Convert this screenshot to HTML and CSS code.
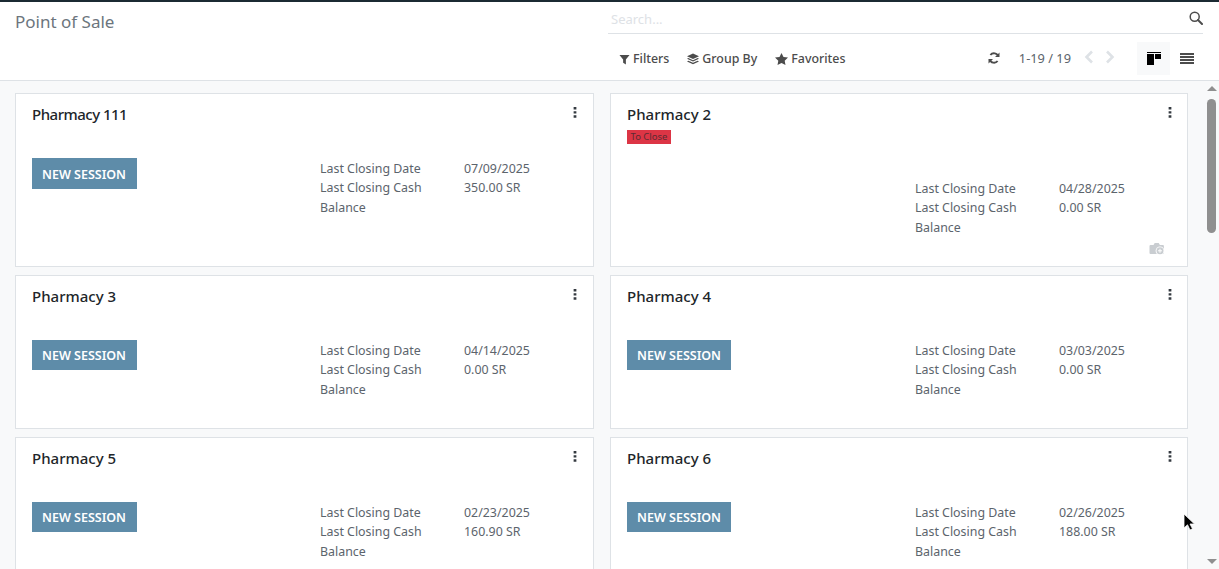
FILE: index.html
```html
<!DOCTYPE html>
<html lang="en">
<head>
<meta charset="utf-8">
<title>Point of Sale</title>
<link rel="stylesheet" href="styles.css">
</head>
<body>
<div class="app">
  <header class="panel">
    <div class="panel-left"><h1 class="title">Point of Sale</h1></div>
    <div class="panel-right">
      <div class="search">
        <span class="search-text">Search...</span>
        <svg class="search-icon" viewBox="0 0 14 14"><circle cx="5.7" cy="5.7" r="4.5" fill="none" stroke="#4c4c4c" stroke-width="1.5"/><path d="M9 9l4 4" stroke="#4c4c4c" stroke-width="2" stroke-linecap="round"/></svg>
      </div>
      <div class="tools">
        <div class="menus">
          <span class="menu"><svg class="micon" viewBox="0 0 12 12"><path d="M0.5 1h11L7.5 6v5.5L4.5 9.5V6z" fill="#4c4c4c"/></svg>Filters</span>
          <span class="menu"><svg class="micon layers" viewBox="0 0 13 12"><path d="M6.5 0L13 3 6.5 6 0 3z" fill="#4c4c4c"/><path d="M1.5 5L6.5 7.3 11.5 5 13 5.8 6.5 8.8 0 5.8zM1.5 7.8L6.5 10.1 11.5 7.8 13 8.6 6.5 11.6 0 8.6z" fill="#4c4c4c"/></svg>Group By</span>
          <span class="menu"><svg class="micon star" viewBox="0 0 13 12"><path d="M6.5 0l2 4 4.5.6-3.3 3.1.8 4.3-4-2.1-4 2.1.8-4.3L0 4.600l4.500-.6z" fill="#4c4c4c"/></svg>Favorites</span>
        </div>
        <div class="pager">
          <svg class="refresh" viewBox="0 0 12 12"><path d="M10.300 4.500A4.500 4.500 0 0 0 2.400 3M1.700 7.500A4.500 4.500 0 0 0 9.600 9" fill="none" stroke="#4c4c4c" stroke-width="1.900"/><path d="M11.500 0.500v4.500H7zM0.500 11.500V7H5z" fill="#4c4c4c"/></svg>
          <span class="count">1-19 / 19</span>
          <svg class="chev" viewBox="0 0 10 14"><path d="M8 1.500L2.500 7 8 12.500" fill="none" stroke="#dee2e6" stroke-width="2.600"/></svg>
          <svg class="chev chev-next" viewBox="0 0 10 14"><path d="M2 1.500L7.500 7 2 12.500" fill="none" stroke="#dee2e6" stroke-width="2.600"/></svg>
          <span class="view view-on"><svg class="kanban" viewBox="0 0 14 13"><path d="M0 0h14v1H0zM0 2h7v11H0zM8 2h6v5H8z" fill="#000"/></svg></span>
          <span class="view"><svg class="list" viewBox="0 0 14 11"><path d="M0 0h14v2H0zM0 3h14v2H0zM0 6h14v2H0zM0 9h14v2H0z" fill="#4c4c4c"/></svg></span>
        </div>
      </div>
    </div>
  </header>
  <main class="content">
    <div class="cards">
      <article class="card">
        <div class="card-top"><h2 class="name name-tight">Pharmacy 111</h2><svg class="dots" viewBox="0 0 4 12"><path d="M0.500 0h3v2.600h-3zM0.500 4.500h3v2.600h-3zM0.500 9h3v2.600h-3z" fill="#343a40"/></svg></div>
        <div class="card-body">
          <div class="action"><span class="btn">NEW SESSION</span></div>
          <dl class="stats"><dt>Last Closing Date</dt><dd>07/09/2025</dd><dt>Last Closing Cash Balance</dt><dd>350.00 SR</dd></dl>
        </div>
      </article>
      <article class="card card-tall">
        <div class="card-top"><h2 class="name">Pharmacy 2</h2><svg class="dots" viewBox="0 0 4 12"><path d="M0.500 0h3v2.600h-3zM0.500 4.500h3v2.600h-3zM0.500 9h3v2.600h-3z" fill="#343a40"/></svg></div>
        <span class="badge">To Close</span>
        <div class="card-body card-body-badge">
          <div class="action"></div>
          <dl class="stats"><dt>Last Closing Date</dt><dd>04/28/2025</dd><dt>Last Closing Cash Balance</dt><dd>0.00 SR</dd></dl>
        </div>
        <svg class="camera" viewBox="0 0 16 14"><path d="M1.500 3h3l1.200-2h4l1.200 2h3q1 0 1 1v7q0 1-1 1h-12.400q-1 0-1-1V4q0-1 1-1z" fill="#c9cdd1"/><circle cx="11" cy="8.800" r="4.400" fill="#fff"/><circle cx="11" cy="8.800" r="3.500" fill="#c9cdd1"/><path d="M9 8.800h4M11 6.800v4" stroke="#fff" stroke-width="1"/></svg>
      </article>
      <article class="card">
        <div class="card-top"><h2 class="name">Pharmacy 3</h2><svg class="dots" viewBox="0 0 4 12"><path d="M0.500 0h3v2.600h-3zM0.500 4.500h3v2.600h-3zM0.500 9h3v2.600h-3z" fill="#343a40"/></svg></div>
        <div class="card-body">
          <div class="action"><span class="btn">NEW SESSION</span></div>
          <dl class="stats"><dt>Last Closing Date</dt><dd>04/14/2025</dd><dt>Last Closing Cash Balance</dt><dd>0.00 SR</dd></dl>
        </div>
      </article>
      <article class="card">
        <div class="card-top"><h2 class="name">Pharmacy 4</h2><svg class="dots" viewBox="0 0 4 12"><path d="M0.500 0h3v2.600h-3zM0.500 4.500h3v2.600h-3zM0.500 9h3v2.600h-3z" fill="#343a40"/></svg></div>
        <div class="card-body">
          <div class="action"><span class="btn">NEW SESSION</span></div>
          <dl class="stats"><dt>Last Closing Date</dt><dd>03/03/2025</dd><dt>Last Closing Cash Balance</dt><dd>0.00 SR</dd></dl>
        </div>
      </article>
      <article class="card">
        <div class="card-top"><h2 class="name">Pharmacy 5</h2><svg class="dots" viewBox="0 0 4 12"><path d="M0.500 0h3v2.600h-3zM0.500 4.500h3v2.600h-3zM0.500 9h3v2.600h-3z" fill="#343a40"/></svg></div>
        <div class="card-body">
          <div class="action"><span class="btn">NEW SESSION</span></div>
          <dl class="stats"><dt>Last Closing Date</dt><dd>02/23/2025</dd><dt>Last Closing Cash Balance</dt><dd>160.90 SR</dd></dl>
        </div>
      </article>
      <article class="card">
        <div class="card-top"><h2 class="name">Pharmacy 6</h2><svg class="dots" viewBox="0 0 4 12"><path d="M0.500 0h3v2.600h-3zM0.500 4.500h3v2.600h-3zM0.500 9h3v2.600h-3z" fill="#343a40"/></svg></div>
        <div class="card-body">
          <div class="action"><span class="btn">NEW SESSION</span></div>
          <dl class="stats"><dt>Last Closing Date</dt><dd>02/26/2025</dd><dt>Last Closing Cash Balance</dt><dd>188.00 SR</dd></dl>
        </div>
      </article>
    </div>
    <div class="scrollbar">
      <span class="arrow-up"></span>
      <span class="thumb"></span>
      <span class="track"></span>
      <span class="arrow-down"></span>
    </div>
  </main>
</div>
<svg class="cursor" viewBox="0 0 12 18"><path d="M1 1v14l3.500-3.200L7 17l2.500-1.200L7 11h4.500z" fill="#000" stroke="#fff" stroke-width="0.800"/></svg>
</body>
</html>
```
FILE: styles.css
```css
* { box-sizing: border-box; }
html, body { margin: 0; height: 100%; overflow: hidden; }
body { font-family: "Noto Sans", "Open Sans", sans-serif; font-size: 13px; color: #4c4c4c; background: #fff; }
.app { height: 569px; display: flex; flex-direction: column; border-top: 2px solid #1b2a33; }
.panel { height: 79px; flex: none; display: flex; justify-content: space-between; padding: 0 15px; border-bottom: 1px solid #dee2e6; background: #fff; }
.title { margin: 9px 0 0; font-size: 17px; font-weight: 400; line-height: 22px; color: #6c757d; }
.panel-right { width: 596px; display: flex; flex-direction: column; }
.search { height: 32px; display: flex; align-items: center; justify-content: space-between; border-bottom: 1px solid #dee2e6; padding: 2px 1px 0 3px; margin-right: 1px; }
.search-text { color: #dee2e6; font-size: 13px; }
.search-icon { width: 14px; height: 14px; margin-top: -1px; margin-right: -1px; }
.tools { display: flex; justify-content: space-between; align-items: flex-start; padding: 8px 0 0 11px; }
.menus { display: flex; gap: 18px; padding-top: 8px; }
.menu { display: inline-flex; align-items: center; font-weight: 500; font-size: 12.400px; line-height: 18px; color: #4c4c4c; }
.micon { width: 11px; height: 11px; margin-right: 3px; }
.layers { width: 12px; height: 12px; }
.star { width: 13px; height: 12px; }
.pager { display: flex; align-items: center; height: 33px; margin-right: 1px; }
.refresh { width: 12px; height: 12px; margin-right: 19px; margin-top: -2px; }
.count { font-size: 12.800px; margin-right: 13px; margin-top: -2px; color: #5c646c; }
.chev { width: 10px; height: 14px; margin-right: 11px; margin-top: -3px; }
.chev-next { margin-right: 22px; }
.view { width: 33px; height: 33px; display: flex; align-items: center; justify-content: center; }
.view-on { background: #f8f9fa; }
.kanban { width: 14px; height: 13px; }
.list { width: 14px; height: 11px; }
.content { flex: 1; min-height: 0; display: flex; background: #f8f9fa; overflow: hidden; }
.cards { flex: 1; display: grid; grid-template-columns: 579px 578px; grid-auto-rows: min-content; gap: 8px 16px; padding: 12px 0 0 15px; align-content: start; }
.card { position: relative; background: #fff; border: 1px solid #dee2e6; padding: 8px 16px; min-height: 154px; }
.card-tall { min-height: 174px; }
.card-top { display: flex; justify-content: space-between; align-items: flex-start; }
.name { margin: 0; padding-top: 1px; font-size: 15px; font-weight: 500; line-height: 22px; color: #212529; }
.name-tight { letter-spacing: -0.5px; }
.dots { width: 4px; height: 11px; margin: 5px -1px 0 0; flex: none; }
.card:nth-child(odd) .dots { margin-right: 0; }
.badge { display: block; width: 44px; height: 14px; margin-top: 5px; background: #dc3545; color: #5c2a32; font-size: 9.500px; line-height: 14px; text-align: center; }
.card-body { display: flex; margin-top: 33px; }
.card-body-badge { margin-top: 34px; }
.action { width: 288px; flex: none; }
.btn { display: inline-block; height: 31px; padding: 1px 10px 0; background: #5e8ca9; color: #fff; font-weight: 600; font-size: 12.500px; line-height: 31px; white-space: nowrap; }
.card:nth-child(odd) .btn { padding-right: 11px; }
.card:nth-child(n+3) .btn { height: 30px; line-height: 29px; }
.stats { margin: 0; display: grid; grid-template-columns: 144px 110px; line-height: 19.500px; font-size: 12.400px; color: #5c646c; padding-top: 0.700px; }
.stats dt { font-weight: 400; padding-right: 24px; }
.stats dd { margin: 0; }
.camera { position: absolute; right: 22px; bottom: 10px; width: 16px; height: 14px; }
.scrollbar { width: 15px; flex: none; display: flex; flex-direction: column; align-items: center; background: #f8f9fa; padding: 5px 0; }
.arrow-up, .arrow-down { width: 0; height: 0; border-left: 5px solid transparent; border-right: 5px solid transparent; flex: none; }
.arrow-up { border-bottom: 5px solid #8f8f8f; }
.arrow-down { border-top: 5px solid #8f8f8f; }
.thumb { width: 9px; height: 134px; margin-top: 8px; background: #8f8f8f; border-radius: 5px; flex: none; }
.track { flex: 1; }
.cursor { position: absolute; left: 1183px; top: 513px; width: 12px; height: 18px; }
```
